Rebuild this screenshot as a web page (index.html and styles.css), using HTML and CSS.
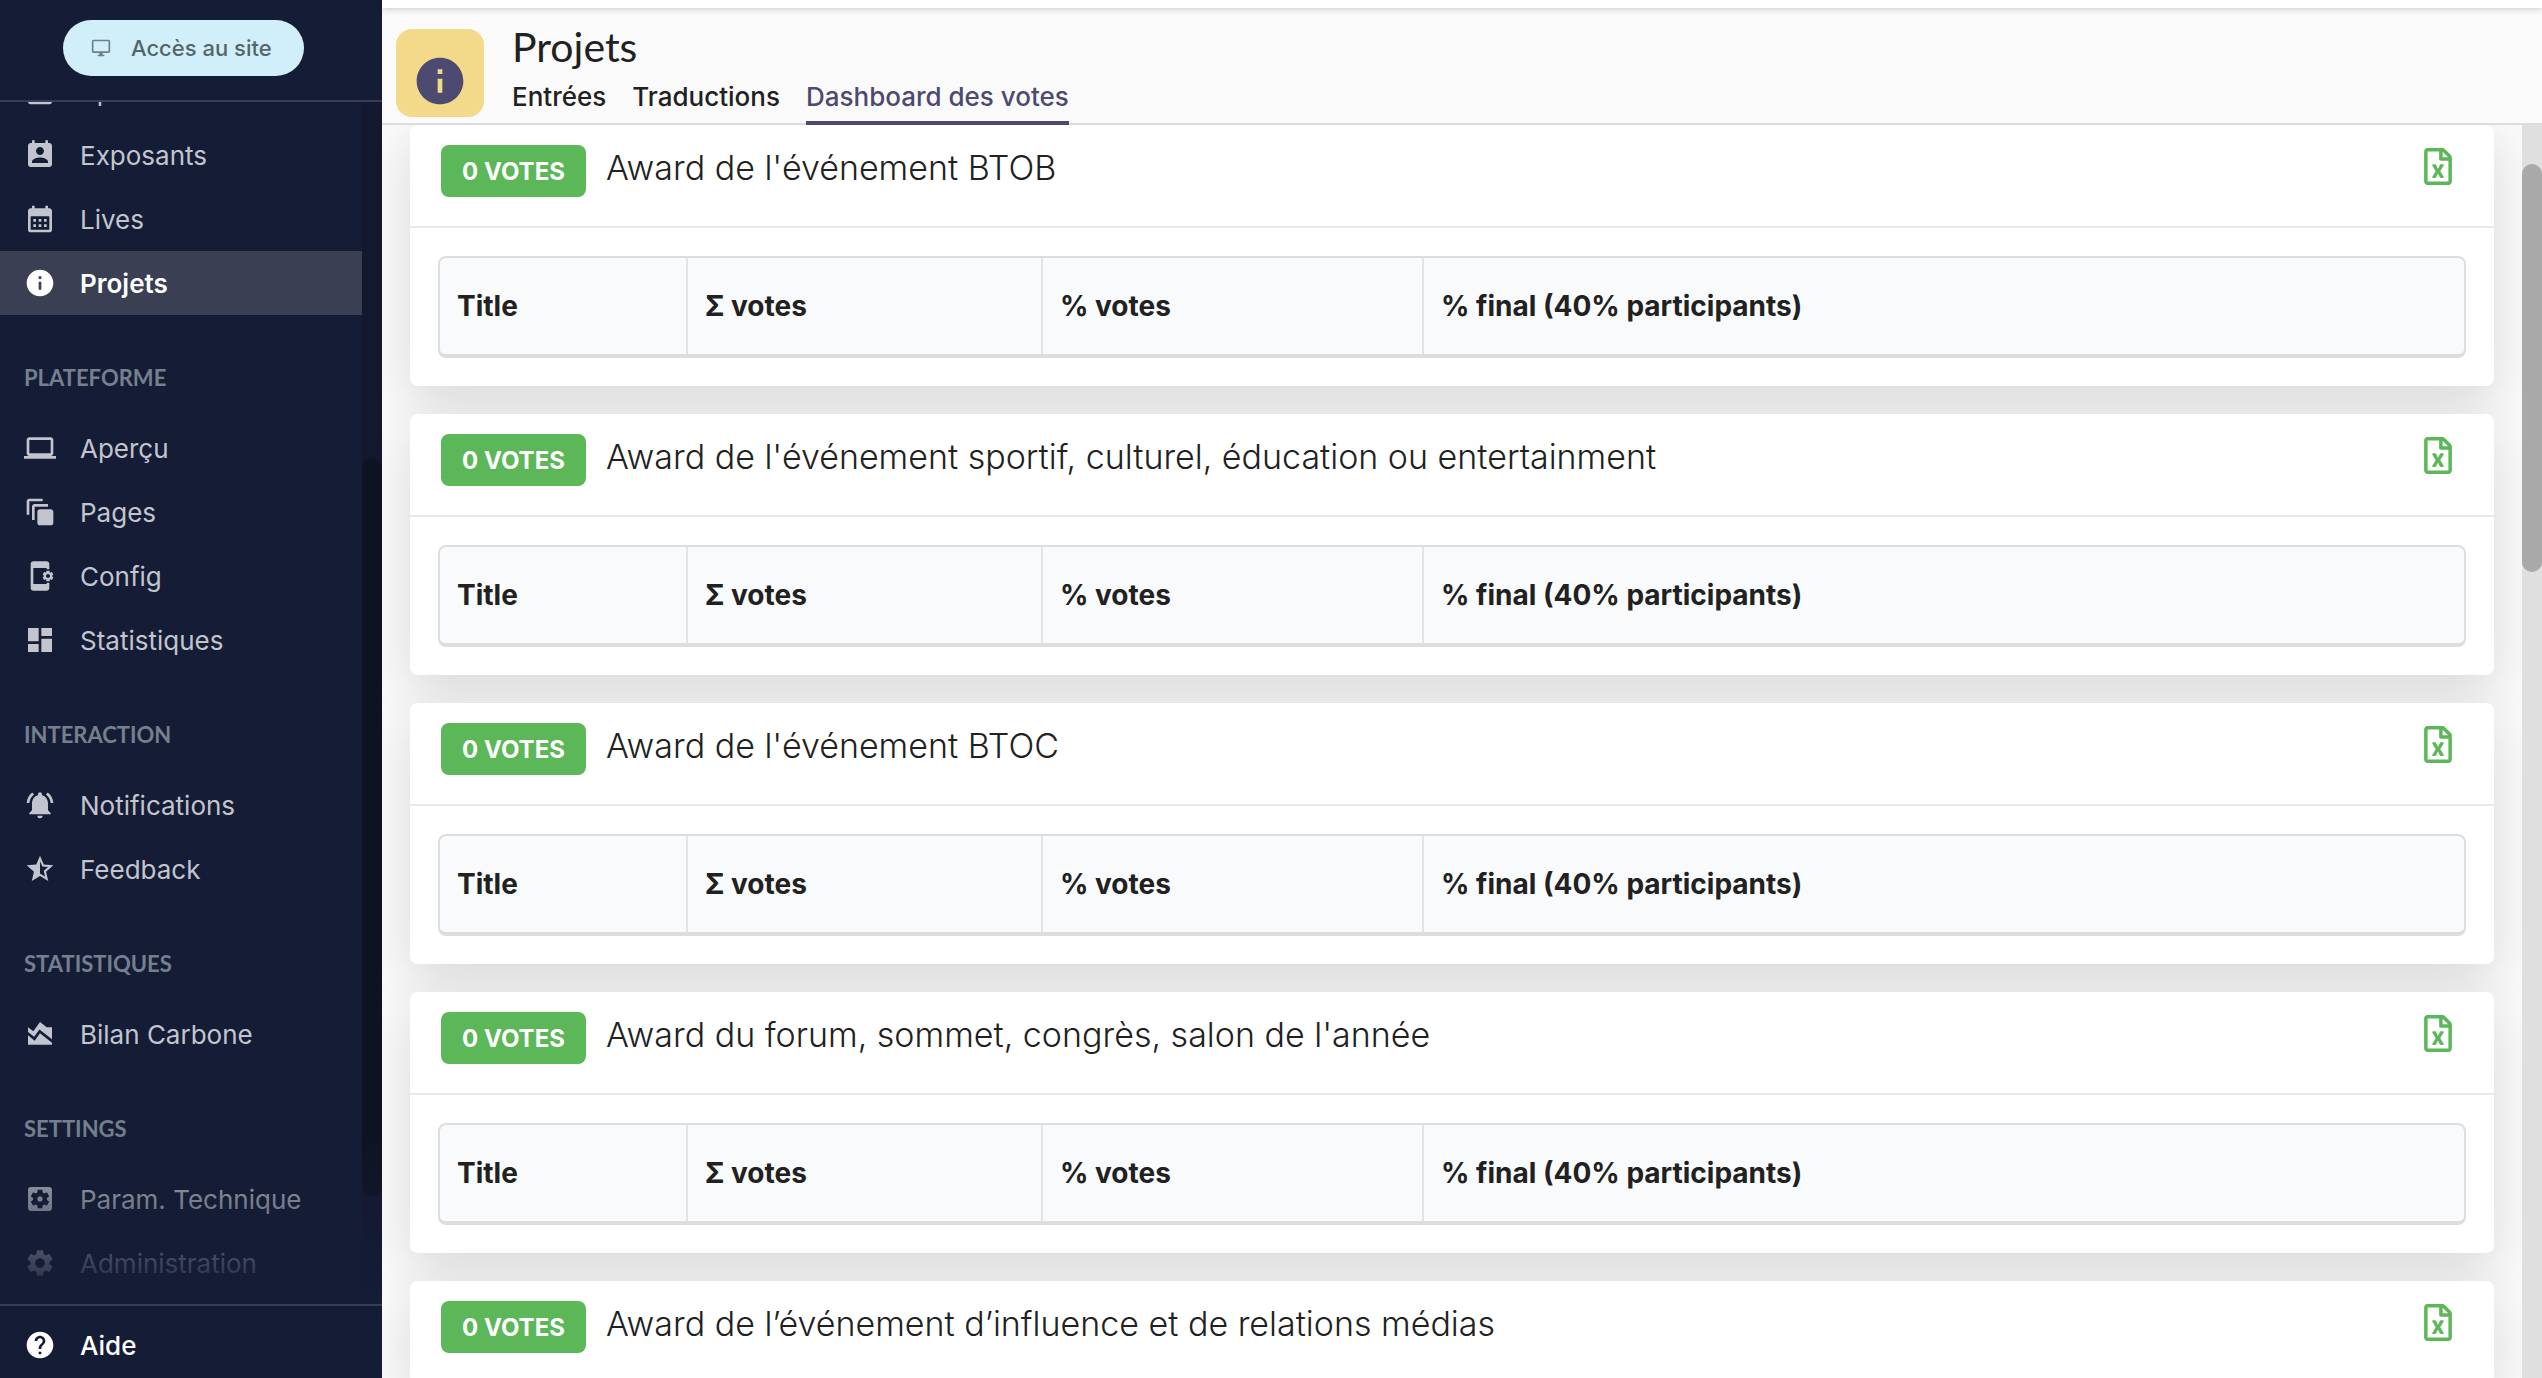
FILE: index.html
```html
<!DOCTYPE html>
<html lang="fr">
<head>
<meta charset="utf-8">
<title>Projets</title>
<link rel="stylesheet" href="styles.css">
</head>
<body>
<svg class="sprite" aria-hidden="true">
  <symbol id="i-excel" viewBox="0 0 384 512"><path d="M369.9 97.9L286 14C277 5 264.8-.1 252.1-.1H48C21.5 0 0 21.5 0 48v416c0 26.500 21.500 48 48 48h288c26.500 0 48-21.500 48-48V131.900c0-12.700-5.100-25-14.100-34zM332.100 128H256V51.900l76.100 76.100zM48 464V48h160v104c0 13.300 10.700 24 24 24h104v288H48zm212-240h-28.800c-4.400 0-8.400 2.400-10.500 6.300-18 33.100-22.200 42.400-28.600 57.700-13.900-29.100-6.900-17.300-28.600-57.700-2.100-3.900-6.200-6.300-10.600-6.300H124c-9.300 0-15 10-10.400 18l46.300 78-46.300 78c-4.700 8 1.100 18 10.400 18h28.900c4.400 0 8.400-2.400 10.500-6.300 21.700-40 23-45 28.600-57.700 14.900 30.200 5.900 15.900 28.600 57.700 2.100 3.900 6.200 6.300 10.600 6.300H260c9.300 0 15-10 10.400-18L224 320c.7-1.100 30.300-50.500 46.300-78 4.700-8-1.100-18-10.300-18z"/></symbol>
  <symbol id="i-info" viewBox="0 0 24 24"><path d="M12 2C6.480 2 2 6.480 2 12s4.480 10 10 10 10-4.480 10-10S17.520 2 12 2zm1 15h-2v-6h2v6zm0-8h-2V7h2v2z"/></symbol>
</svg>
<div class="app">
  <aside class="sidebar">
    <div class="sidebar-top">
      <a class="site-link" href="#"><svg viewBox="0 0 24 24"><path d="M21 2H3c-1.100 0-2 .9-2 2v12c0 1.100.9 2 2 2h7v2H8v2h8v-2h-2v-2h7c1.100 0 2-.9 2-2V4c0-1.100-.9-2-2-2zm0 14H3V4h18v12z"/></svg>Accès au site</a>
    </div>
    <div class="sidebar-scroll">
      <nav class="menu">
        <a class="item" href="#"><svg viewBox="0 0 24 24"><path d="M5 3h14a2 2 0 0 1 2 2v15a2 2 0 0 1-2 2H5a2 2 0 0 1-2-2V5a2 2 0 0 1 2-2z"/></svg>Speakers</a>
        <a class="item" href="#"><svg viewBox="0 0 24 24"><path d="M19 3h-1V1h-2v2H8V1H6v2H5c-1.110 0-2 .9-2 2v14c0 1.100.89 2 2 2h14c1.100 0 2-.9 2-2V5c0-1.100-.9-2-2-2zm-7 3c1.660 0 3 1.340 3 3s-1.340 3-3 3-3-1.340-3-3 1.340-3 3-3zm6 12H6v-1c0-2 4-3.100 6-3.100s6 1.100 6 3.100v1z"/></svg>Exposants</a>
        <a class="item" href="#"><svg viewBox="0 0 24 24"><path d="M19 4h-1V2h-2v2H8V2H6v2H5c-1.110 0-2 .9-2 2v14c0 1.100.89 2 2 2h14c1.100 0 2-.9 2-2V6c0-1.100-.9-2-2-2zm0 16H5V10h14v10zM9 14H7v-2h2v2zm4 0h-2v-2h2v2zm4 0h-2v-2h2v2zm-8 4H7v-2h2v2zm4 0h-2v-2h2v2zm4 0h-2v-2h2v2z"/></svg>Lives</a>
        <a class="item active" href="#" aria-current="page"><svg><use href="#i-info"/></svg>Projets</a>
        <h2>Plateforme</h2>
        <a class="item" href="#"><svg viewBox="0 0 24 24"><path d="M20 18c1.100 0 1.990-.9 1.990-2L22 6c0-1.100-.9-2-2-2H4c-1.100 0-2 .9-2 2v10c0 1.100.9 2 2 2H0v2h24v-2h-4zM4 6h16v10H4V6z"/></svg>Aperçu</a>
        <a class="item" href="#"><svg viewBox="0 0 24 24"><path d="M14 2H4c-1.110 0-2 .9-2 2v10h2V4h10V2zm4 4H8c-1.110 0-2 .9-2 2v10h2V8h10V6zm2 4h-8c-1.110 0-2 .9-2 2v8c0 1.100.89 2 2 2h8c1.100 0 2-.9 2-2v-8c0-1.100-.89-2-2-2z"/></svg>Pages</a>
        <a class="item" href="#"><svg viewBox="0 0 24 24"><path d="M21.810 12.740l-.82-.63v-.22l.8-.63c.16-.12.2-.34.1-.51l-.85-1.480c-.07-.13-.21-.2-.35-.2-.05 0-.1.010-.15.030l-.95.380c-.08-.05-.11-.07-.19-.11l-.15-1.010c-.03-.21-.2-.36-.4-.36h-1.710c-.2 0-.37.15-.4.340l-.14 1.010c-.03.020-.07.030-.1.050l-.09.060-.95-.38c-.05-.02-.1-.03-.15-.03-.14 0-.27.070-.35.200l-.85 1.480c-.1.170-.06.390.1.510l.8.630v.230l-.8.630c-.16.120-.2.340-.1.510l.85 1.480c.07.130.21.200.35.200.05 0 .1-.01.150-.03l.95-.37c.08.050.12.070.2.110l.15 1.010c.03.200.2.340.4.340h1.710c.2 0 .37-.15.400-.34l.15-1.010c.03-.02.07-.03.1-.05l.09-.06.95.380c.05.020.1.030.15.030.14 0 .27-.07.350-.2l.85-1.480c.1-.17.060-.39-.1-.51zM18 13.500c-.83 0-1.500-.67-1.500-1.500s.67-1.500 1.500-1.500 1.500.67 1.500 1.500-.67 1.500-1.500 1.500zM17 18H7V6h10v1h2V3c0-1.100-.9-2-2-2H7c-1.100 0-2 .9-2 2v18c0 1.100.9 2 2 2h10c1.100 0 2-.9 2-2v-4h-2v1z"/></svg>Config</a>
        <a class="item" href="#"><svg viewBox="0 0 24 24"><path d="M3 13h8V3H3v10zm0 8h8v-6H3v6zm10 0h8V11h-8v10zm0-18v6h8V3h-8z"/></svg>Statistiques</a>
        <h2>Interaction</h2>
        <a class="item" href="#"><svg viewBox="0 0 24 24"><path d="M7.580 4.080L6.150 2.650C3.750 4.480 2.170 7.300 2.030 10.500h2c.15-2.650 1.510-4.970 3.550-6.420zm12.390 6.420h2c-.15-3.200-1.730-6.020-4.120-7.850l-1.420 1.430c2.020 1.450 3.390 3.770 3.540 6.420zM18 11c0-3.070-1.640-5.640-4.500-6.320V4c0-.83-.67-1.500-1.500-1.500s-1.500.67-1.500 1.500v.68C7.630 5.360 6 7.920 6 11v5l-2 2v1h16v-1l-2-2v-5zm-6 11c.14 0 .27-.01.4-.04.65-.14 1.180-.58 1.440-1.180.1-.24.15-.5.15-.78h-4c.01 1.100.9 2 2.010 2z"/></svg>Notifications</a>
        <a class="item" href="#"><svg viewBox="0 0 24 24"><path d="M22 9.240l-7.190-.62L12 2 9.190 8.630 2 9.240l5.460 4.730L5.820 21 12 17.270 18.180 21l-1.630-7.030L22 9.240zM12 15.400V6.100l1.710 4.040 4.380.38-3.320 2.880 1 4.280L12 15.400z"/></svg>Feedback</a>
        <h2>Statistiques</h2>
        <a class="item" href="#"><svg viewBox="0 0 24 24"><path d="M3 13v7h18v-1.500l-9-7L8 17l-5-4zm0-6l4 3 5-7 5 4h4v8.970l-9.400-7.310-3.980 5.480L3 10.440V7z"/></svg>Bilan Carbone</a>
        <h2>Settings</h2>
        <a class="item" href="#"><svg viewBox="0 0 24 24"><path d="M12 10c-1.100 0-2 .9-2 2s.9 2 2 2 2-.9 2-2-.9-2-2-2zm7-7H5c-1.110 0-2 .9-2 2v14c0 1.100.89 2 2 2h14c1.110 0 2-.9 2-2V5c0-1.100-.89-2-2-2zm-1.750 9c0 .23-.02.46-.05.68l1.480 1.160c.13.11.17.3.08.45l-1.400 2.420c-.09.15-.27.21-.43.15l-1.740-.7c-.36.28-.76.51-1.180.69l-.26 1.850c-.03.17-.18.3-.35.3h-2.800c-.17 0-.32-.13-.35-.29l-.26-1.850c-.43-.18-.82-.41-1.180-.69l-1.740.7c-.16.06-.34 0-.43-.15l-1.400-2.420c-.09-.15-.05-.34.08-.45l1.480-1.160c-.03-.23-.05-.46-.05-.69 0-.23.02-.46.05-.68l-1.480-1.160c-.13-.11-.17-.3-.08-.45l1.400-2.420c.09-.15.27-.21.43-.15l1.740.7c.36-.28.76-.51 1.180-.69l.26-1.850c.03-.17.18-.3.35-.3h2.800c.17 0 .32.13.35.29l.26 1.850c.43.18.82.41 1.180.69l1.740-.7c.16-.06.34 0 .43.15l1.400 2.420c.09.15.05.34-.08.45l-1.480 1.160c.03.23.05.46.05.69z"/></svg>Param. Technique</a>
        <a class="item" href="#"><svg viewBox="0 0 24 24"><path d="M19.140 12.940c.04-.3.06-.61.06-.94 0-.32-.02-.64-.07-.94l2.030-1.580c.18-.14.23-.41.12-.61l-1.920-3.320c-.12-.22-.37-.29-.59-.22l-2.390.96c-.5-.38-1.030-.7-1.620-.94l-.36-2.540c-.04-.24-.24-.41-.48-.41h-3.840c-.24 0-.43.17-.47.41l-.36 2.540c-.59.24-1.130.57-1.620.94l-2.390-.96c-.22-.08-.47 0-.59.22L2.740 8.870c-.12.21-.08.47.12.61l2.030 1.580c-.05.3-.09.63-.09.94s.02.64.07.94l-2.030 1.580c-.18.14-.23.41-.12.61l1.920 3.320c.12.22.37.29.59.22l2.390-.96c.5.38 1.030.7 1.620.94l.36 2.540c.05.24.24.41.48.41h3.840c.24 0 .44-.17.47-.41l.36-2.540c.59-.24 1.130-.56 1.620-.94l2.390.96c.22.08.47 0 .59-.22l1.920-3.320c.12-.22.07-.47-.12-.61l-2.010-1.580zM12 15.600c-1.980 0-3.600-1.620-3.600-3.600s1.620-3.600 3.600-3.600 3.600 1.620 3.600 3.600-1.620 3.600-3.600 3.600z"/></svg>Administration</a>
      </nav>
      <div class="track"><div class="thumb"></div></div>
    </div>
    <div class="sidebar-bottom">
      <a class="item help" href="#"><svg viewBox="0 0 24 24"><path d="M12 2C6.480 2 2 6.480 2 12s4.480 10 10 10 10-4.480 10-10S17.520 2 12 2zm1 17h-2v-2h2v2zm2.070-7.750l-.9.920C13.450 12.900 13 13.500 13 15h-2v-.5c0-1.100.45-2.100 1.170-2.830l1.240-1.260c.37-.36.59-.86.59-1.410 0-1.100-.9-2-2-2s-2 .9-2 2H8c0-2.210 1.790-4 4-4s4 1.790 4 4c0 .88-.36 1.680-.93 2.250z"/></svg>Aide</a>
    </div>
  </aside>
  <div class="main">
    <div class="strip"></div>
    <header class="page-header">
      <div class="page-icon"><svg><use href="#i-info"/></svg></div>
      <div class="page-heading">
        <h1>Projets</h1>
        <nav class="tabs">
          <a href="#">Entrées</a>
          <a href="#">Traductions</a>
          <a class="current" href="#" aria-current="page">Dashboard des votes</a>
        </nav>
      </div>
    </header>
    <div class="content">
      <main class="cards">
        <section class="card">
          <div class="card-head"><span class="badge">0 VOTES</span><h2>Award de l'événement BTOB</h2><button type="button" aria-label="Export Excel"><svg><use href="#i-excel"/></svg></button></div>
          <div class="card-body"><table><thead><tr><th class="c-title">Title</th><th class="c-sum">Σ votes</th><th class="c-pct">% votes</th><th>% final (40% participants)</th></tr></thead></table></div>
        </section>
        <section class="card">
          <div class="card-head"><span class="badge">0 VOTES</span><h2>Award de l'événement sportif, culturel, éducation ou entertainment</h2><button type="button" aria-label="Export Excel"><svg><use href="#i-excel"/></svg></button></div>
          <div class="card-body"><table><thead><tr><th class="c-title">Title</th><th class="c-sum">Σ votes</th><th class="c-pct">% votes</th><th>% final (40% participants)</th></tr></thead></table></div>
        </section>
        <section class="card">
          <div class="card-head"><span class="badge">0 VOTES</span><h2>Award de l'événement BTOC</h2><button type="button" aria-label="Export Excel"><svg><use href="#i-excel"/></svg></button></div>
          <div class="card-body"><table><thead><tr><th class="c-title">Title</th><th class="c-sum">Σ votes</th><th class="c-pct">% votes</th><th>% final (40% participants)</th></tr></thead></table></div>
        </section>
        <section class="card">
          <div class="card-head"><span class="badge">0 VOTES</span><h2>Award du forum, sommet, congrès, salon de l'année</h2><button type="button" aria-label="Export Excel"><svg><use href="#i-excel"/></svg></button></div>
          <div class="card-body"><table><thead><tr><th class="c-title">Title</th><th class="c-sum">Σ votes</th><th class="c-pct">% votes</th><th>% final (40% participants)</th></tr></thead></table></div>
        </section>
        <section class="card">
          <div class="card-head"><span class="badge">0 VOTES</span><h2>Award de l’événement d’influence et de relations médias</h2><button type="button" aria-label="Export Excel"><svg><use href="#i-excel"/></svg></button></div>
        </section>
      </main>
      <div class="track"><div class="thumb"></div></div>
    </div>
  </div>
</div>
</body>
</html>
```
FILE: styles.css
```css
* { box-sizing: border-box; }
body { margin: 0; font-family: Inter, "Liberation Sans", sans-serif; font-size: 26px; color: #212121; }
a { color: inherit; text-decoration: none; }
h1, h2 { margin: 0; }
svg { fill: currentColor; display: block; }
.sprite { display: none; }
.app { display: flex; height: 100vh; overflow: hidden; }

.sidebar { flex: none; width: 382px; display: flex; flex-direction: column; background: #151c35; color: #c2c5ce; }
.sidebar-top { height: 102px; padding: 20px 78px 0 63px; border-bottom: 2px solid #373d52; }
.site-link { display: flex; align-items: center; gap: 20px; height: 56px; padding: 0 28px; border-radius: 28px; background: #d0effa; color: #566668; font-size: 22px; font-weight: 500; }
.site-link svg { width: 20px; height: 20px; opacity: .8; }
.sidebar-scroll { position: relative; flex: 1; min-height: 0; display: flex; overflow: hidden; }
.sidebar-scroll::after { content: ""; position: absolute; inset: auto 0 0 0; height: 176px; background: linear-gradient(rgba(21, 28, 53, 0), #151c35); }
.menu { flex: 1; margin-top: -43px; }
.item { display: flex; align-items: center; gap: 24px; height: 64px; padding: 0 24px; white-space: nowrap; }
.item svg { width: 32px; height: 32px; flex: none; }
.item.active { background: #3a3f54; color: #fff; font-weight: 600; }
.menu h2 { height: 101px; padding: 47px 24px 0; font: 700 22px/32px Lato, sans-serif; color: #75808f; text-transform: uppercase; }
.sidebar-bottom { height: 74px; padding-top: 7px; border-top: 2px solid #373d52; }
.item.help { color: #fff; font-weight: 500; }
.track { flex: none; width: 20px; }
.thumb { border-radius: 10px; }
.sidebar-scroll .track { background: #14182f; padding-top: 356px; }
.sidebar-scroll .thumb { height: 738px; background: #0d1321; }

.main { flex: 1; min-width: 0; display: flex; flex-direction: column; background: #fafafa; }
.strip { flex: none; height: 8px; background: #fff; box-shadow: 0 1px 6px rgba(0, 0, 0, .2); z-index: 1; }
.page-header { flex: none; display: flex; gap: 28px; height: 117px; padding-left: 14px; border-bottom: 2px solid #dcdcdc; background: #fafafa; }
.page-icon { width: 88px; height: 88px; margin-top: 21px; padding: 24px 16px 8px; border-radius: 16px; background: #f3d98a; color: #4c4a70; }
.page-icon svg { width: 56px; height: 56px; }
.page-heading { padding-top: 17px; }
h1 { font: 400 41px/44px Lato, sans-serif; }
.tabs { display: flex; gap: 26px; margin-top: 12px; font-weight: 500; line-height: 32px; }
.tabs a { padding-bottom: 8px; border-bottom: 4px solid transparent; }
.tabs .current { color: #4c4a70; border-color: #4c4a70; }

.content { flex: 1; min-height: 0; display: flex; overflow: hidden; }
.cards { flex: 1; min-width: 0; display: flex; flex-direction: column; gap: 28px; padding: 0 28px; }
.card { flex: none; border-radius: 8px; background: #fff; box-shadow: 0 16px 50px rgba(34, 36, 38, .15); }
.card-head { display: flex; align-items: flex-start; height: 103px; padding: 20px 42px 0 31px; border-bottom: 2px solid #e8e8e8; }
.badge { width: 145px; height: 52px; border-radius: 8px; background: #5bb757; color: #fff; font-size: 24px; font-weight: 700; line-height: 54px; text-align: center; }
.card-head h2 { flex: 1; margin-left: 20px; font-size: 34px; font-weight: 300; line-height: 46px; }
.card-head button { padding: 3px 0 0; border: 0; background: none; color: #5bb757; }
.card-head button svg { width: 28px; height: 37px; }
.card-body { padding: 28px; }
table { width: 100%; table-layout: fixed; border: 2px solid #dcddde; border-bottom-width: 4px; border-radius: 8px; border-spacing: 0; background: #f9fafc; }
th { height: 96px; padding: 0 17px; border-right: 2px solid #e3e4e5; font-size: 28px; font-weight: 700; text-align: left; }
th:last-child { border-right: 0; }
.c-title { width: 248px; }
.c-sum { width: 355px; }
.c-pct { width: 381px; }
.content .track { background: #dfdfdf; padding-top: 39px; }
.content .thumb { height: 408px; background: #a9a9a9; }
```
